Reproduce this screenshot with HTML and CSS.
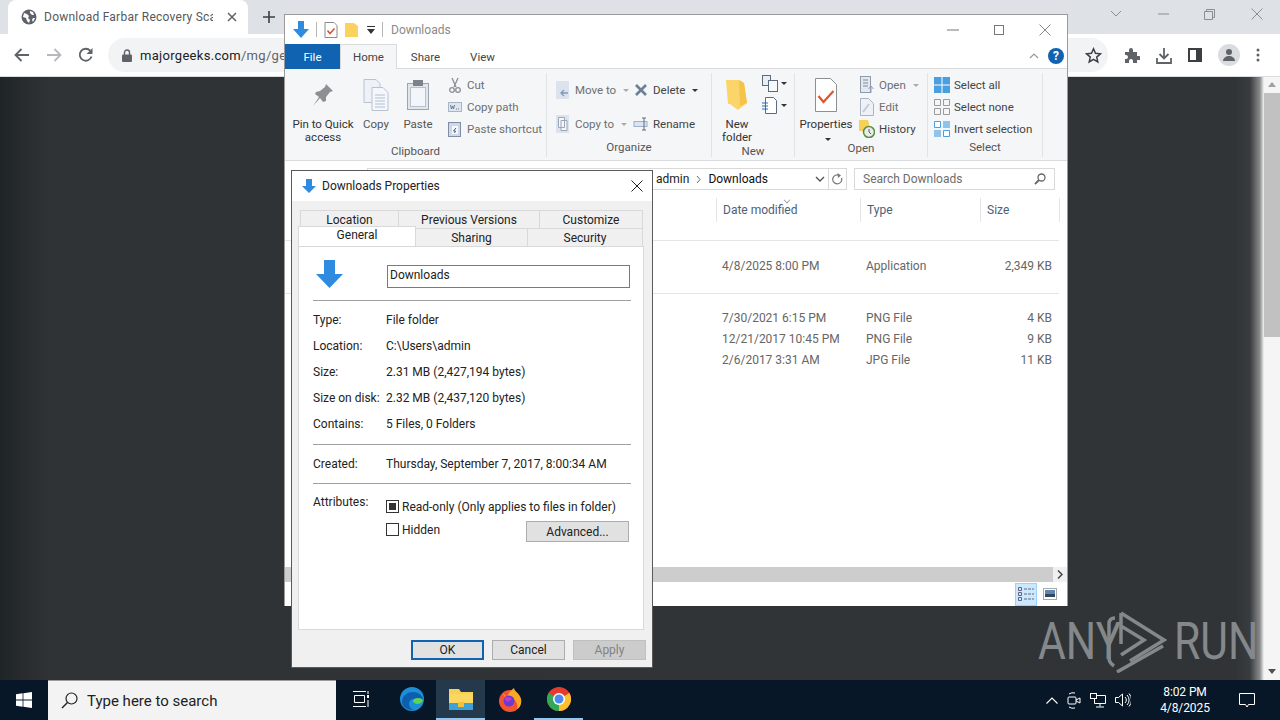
FILE: index.html
```html
<!DOCTYPE html>
<html lang="en">

<head>
    <meta charset="UTF-8">
    <title>Downloads Properties</title>
    <link rel="stylesheet" href="styles.css">
</head>

<body>
    <div class="browser">
        <div class="tabstrip">
            <div class="tab">
                <svg class="tab-globe" width="16" height="16" viewBox="0 0 16 16"><circle cx="8" cy="8" r="7.5" fill="#5f6368"/><path d="M3 4l3 1 2 2-1 2 2 2-1 3-2-2-1-3-3-1zM9 2l3 1 1 3-2 0-2-2zM12 9l2 0-2 4-1-2z" fill="#fff"/></svg>
                <span class="tab-title">Download Farbar Recovery Scan</span>
                <svg class="tab-close" width="10" height="10" viewBox="0 0 10 10"><path d="M1 1l8 8M9 1l-8 8" stroke="#5f6368" stroke-width="1.5"/></svg>
            </div>
            <svg class="tab-new" width="12" height="12" viewBox="0 0 12 12"><path d="M6 0v12M0 6h12" stroke="#3c4043" stroke-width="1.6"/></svg>
            <div class="win-controls">
                <svg width="12" height="8" viewBox="0 0 12 8"><path d="M1 1l5 5 5-5" fill="none" stroke="#8a8d91" stroke-width="1"/></svg>
                <svg width="11" height="2" viewBox="0 0 11 2"><path d="M0 1h11" stroke="#8a8d91"/></svg>
                <svg width="11" height="11" viewBox="0 0 11 11"><path d="M.5 2.5h8v8h-8zM2.5 2.5v-2h8v8h-2" fill="none" stroke="#8a8d91"/></svg>
                <svg width="12" height="12" viewBox="0 0 12 12"><path d="M.5.5l11 11M11.500.5l-11 11" stroke="#8a8d91"/></svg>
            </div>
        </div>
        <div class="toolbar">
            <svg class="nav" width="16" height="14" viewBox="0 0 16 14"><path d="M15 7H2M7.500 1L1.500 7l6 6" fill="none" stroke="#5f6368" stroke-width="1.8"/></svg>
            <svg class="nav" width="16" height="14" viewBox="0 0 16 14"><path d="M1 7h13M8.500 1l6 6-6 6" fill="none" stroke="#b6b8bb" stroke-width="1.8"/></svg>
            <svg class="nav" width="16" height="16" viewBox="0 0 16 16"><path d="M13.500 9.500A6 6 0 1 1 12.200 3.700" fill="none" stroke="#5f6368" stroke-width="1.800"/><path d="M14.500 1v6h-6z" fill="#5f6368"/></svg>
            <div class="omnibox">
                <svg width="10" height="13" viewBox="0 0 10 13"><path d="M2.500 6V3.500a2.500 2.500 0 0 1 5 0V6" fill="none" stroke="#5f6368" stroke-width="1.400"/><rect y="5.500" width="10" height="7.500" rx="1" fill="#5f6368"/></svg>
                <span class="url"><b>majorgeeks.com</b>/mg/get/farbar_recovery_scan_tool</span>
                <svg class="star" width="17" height="17" viewBox="0 0 17 17"><path d="M8.500 1.800l2 4.500 4.900.5-3.700 3.300 1.100 4.800-4.300-2.500-4.300 2.500 1.100-4.800L1.600 6.800l4.900-.5z" fill="none" stroke="#3c4043" stroke-width="1.500"/></svg>
            </div>
            <div class="tool-icons">
                <svg width="16" height="16" viewBox="0 0 16 16"><path d="M1 5h4V3a2 2 0 0 1 4 0v2h4v4h2a2 2 0 0 1 0 4h-2v3H9v-2a2 2 0 0 0-4 0v2H1v-4h1a2 2 0 0 0 0-4H1z" fill="#5f6368"/></svg>
                <svg width="16" height="17" viewBox="0 0 16 17"><path d="M8 1v10M3.500 7L8 11.500 12.500 7M1 11v5h14v-5" fill="none" stroke="#5f6368" stroke-width="1.800"/></svg>
                <svg width="14" height="14" viewBox="0 0 14 14"><rect x="1" y="1" width="12" height="12" fill="none" stroke="#3c4043" stroke-width="2"/><rect x="8" y="1" width="5" height="12" fill="#3c4043"/></svg>
                <span class="avatar"><svg width="14" height="14" viewBox="0 0 14 14"><circle cx="7" cy="4" r="3" fill="#5f6368"/><path d="M1 13c0-3 3-5 6-5s6 2 6 5z" fill="#5f6368"/></svg></span>
                <svg width="4" height="14" viewBox="0 0 4 14"><circle cx="2" cy="2" r="1.500" fill="#5f6368"/><circle cx="2" cy="7" r="1.500" fill="#5f6368"/><circle cx="2" cy="12" r="1.500" fill="#5f6368"/></svg>
            </div>
        </div>
    </div>

    <main class="desktop">
        <div class="page-scroll">
            <svg width="8" height="5" viewBox="0 0 8 5"><path d="M4 0l4 5H0z" fill="#a0a0a0"/></svg>
            <div class="page-thumb"></div>
            <svg class="scroll-down" width="8" height="5" viewBox="0 0 8 5"><path d="M0 0h8L4 5z" fill="#505050"/></svg>
        </div>
        <div class="watermark">
            <span>ANY</span>
            <svg width="60" height="62" viewBox="0 0 60 62"><path d="M8 7C3 7 2 10 2 13v34c0 4 2 6 5 8M14 2l43 27-34 21M14 2v31M14 15l23 14-23 15" fill="none" stroke="#85888a" stroke-width="3.500"/><path d="M10 61l46-26" fill="none" stroke="#85888a" stroke-width="3.500"/></svg>
            <span>RUN</span>
        </div>
    </main>

    <section class="explorer">
        <div class="ex-title">
            <svg width="16" height="17" viewBox="0 0 16 17"><path d="M5 0h6v8h5l-8 9-8-9h5z" fill="#2e8be0"/></svg>
            <i class="qa-sep"></i>
            <svg width="14" height="16" viewBox="0 0 14 16"><path d="M1 .5h9l3 3v12H1z" fill="#fff" stroke="#8a8a8a"/><path d="M3.500 8.500l2.500 3 4.500-5" fill="none" stroke="#d9502e" stroke-width="1.500"/></svg>
            <svg width="13" height="16" viewBox="0 0 13 16"><path d="M0 1h9l4 3v11H0z" fill="#fbd25e"/></svg>
            <svg class="qa-drop" width="8" height="8" viewBox="0 0 8 8"><path d="M0 0h8v1H0zM0 3h8L4 8z" fill="#333"/></svg>
            <i class="qa-sep"></i>
            <span class="ex-name">Downloads</span>
            <div class="ex-controls">
                <svg width="12" height="2" viewBox="0 0 12 2"><path d="M0 1h12" stroke="#777"/></svg>
                <svg width="10" height="10" viewBox="0 0 10 10"><rect x=".5" y=".5" width="9" height="9" fill="none" stroke="#777"/></svg>
                <svg width="12" height="12" viewBox="0 0 12 12"><path d="M.5.5l11 11M11.500.5l-11 11" stroke="#888"/></svg>
            </div>
        </div>
        <div class="ex-tabs">
            <span class="ex-tab file">File</span>
            <span class="ex-tab active">Home</span>
            <span class="ex-tab">Share</span>
            <span class="ex-tab">View</span>
            <div class="ex-help">
                <svg width="10" height="6" viewBox="0 0 10 6"><path d="M1 5l4-4 4 4" fill="none" stroke="#999" stroke-width="1.200"/></svg>
                <span class="help-dot">?</span>
            </div>
        </div>
        <div class="ribbon">
            <div class="group clipboard">
                <div class="group-body">
                    <div class="big pin">
                        <svg width="22" height="24" viewBox="0 0 22 24"><path d="M14 1l7 7-3 1-4 5 0 4-3 1-3-4-7 8 6-9-4-3 1-2 4-1 5-4z" fill="#8d8f92"/></svg>
                        <span>Pin to Quick<br>access</span>
                    </div>
                    <div class="big copy">
                        <svg width="26" height="32" viewBox="0 0 26 32"><path d="M1 .5h12l4 4v19H1z" fill="#eef2f8" stroke="#b9c2cf"/><path d="M9 8.500h11l5 5v18H9z" fill="#f4f7fb" stroke="#b9c2cf"/><path d="M12 16h10M12 19h10M12 22h10M12 25h10M12 28h10" stroke="#b4bfd0"/></svg>
                        <span>Copy</span>
                    </div>
                    <div class="big paste">
                        <svg width="22" height="30" viewBox="0 0 22 30"><rect x=".5" y="3.500" width="21" height="26" fill="#e1e5ec" stroke="#9ba4b1"/><rect x="3.500" y="7.500" width="15" height="19" fill="#f2f5fa" stroke="#b7c0cd"/><rect x="6" y="0" width="10" height="6" fill="#7d828a"/></svg>
                        <span>Paste</span>
                    </div>
                    <div class="small-col">
                        <div class="small"><svg width="14" height="16" viewBox="0 0 14 16"><path d="M4 1l4 9M10 1L6 10" stroke="#8d8f92" stroke-width="1.300"/><circle cx="4" cy="13" r="2.300" fill="none" stroke="#8d8f92" stroke-width="1.300"/><circle cx="10" cy="13" r="2.300" fill="none" stroke="#8d8f92" stroke-width="1.300"/></svg>Cut</div>
                        <div class="small"><svg width="14" height="12" viewBox="0 0 14 12"><rect x=".5" y="1.500" width="13" height="9" fill="#dfe5ee" stroke="#a9b5c6"/><path d="M2.500 4l1 4 1-3 1 3 1-4M8 8h1M10 8h1" fill="none" stroke="#6d7b8f"/></svg>Copy path</div>
                        <div class="small"><svg width="14" height="16" viewBox="0 0 14 16"><rect x=".5" y="1.500" width="12" height="14" fill="#cfd8e6" stroke="#7f8ea3"/><rect x="4" y="5" width="6" height="8" fill="#f4f7fb"/><path d="M8 7L5.500 10h2l-1 2" stroke="#4b5a70" fill="none"/></svg>Paste shortcut</div>
                    </div>
                </div>
                <div class="group-label">Clipboard</div>
            </div>
            <div class="group organize">
                <div class="group-body">
                    <div class="small-col tall">
                        <div class="small"><svg width="14" height="18" viewBox="0 0 14 18"><rect width="13" height="18" fill="#dde3ec"/><path d="M12 12H5M8 9l-3 3 3 3" fill="none" stroke="#7f9bc0" stroke-width="1.400"/></svg>Move to<i class="caret"></i></div>
                        <div class="small"><svg width="14" height="18" viewBox="0 0 14 18"><rect width="13" height="18" fill="#dde3ec"/><path d="M2.500 2.500h6v10h-6zM5 5.500h6v10H5z" fill="#f4f6fa" stroke="#9aa7b8"/></svg>Copy to<i class="caret"></i></div>
                    </div>
                    <div class="small-col tall">
                        <div class="small dark"><svg width="14" height="14" viewBox="0 0 14 14"><path d="M2 2l10 10M12 2L2 12" stroke="#6b7f97" stroke-width="2.600"/></svg>Delete<i class="caret dark-caret"></i></div>
                        <div class="small dark"><svg width="16" height="14" viewBox="0 0 16 14"><rect x="1" y="4.500" width="13" height="5" fill="#dbe4ef" stroke="#9db0c6"/><path d="M11 1v12M9 1h4M9 13h4" stroke="#5d6f86"/></svg>Rename</div>
                    </div>
                </div>
                <div class="group-label">Organize</div>
            </div>
            <div class="group newgroup">
                <div class="group-body">
                    <div class="big newfolder">
                        <svg width="22" height="32" viewBox="0 0 22 32"><path d="M0 1h13l5 3 3 20-9 7-8-6H2z" fill="#fbd569"/><path d="M13 1l5 3 3 20-7 3z" fill="#f4c34a"/></svg>
                        <span>New<br>folder</span>
                    </div>
                    <div class="new-items">
                        <div><svg width="16" height="17" viewBox="0 0 16 17"><rect x=".5" y=".5" width="8" height="10" fill="#e9eef5" stroke="#5b6b80"/><rect x="6.500" y="5.500" width="9" height="11" fill="#f8f9fb" stroke="#5b6b80"/></svg><i class="caret dark-caret"></i></div>
                        <div><svg width="16" height="17" viewBox="0 0 16 17"><path d="M3.500.5h8l3 3v13h-11z" fill="#fff" stroke="#5b6b80"/><path d="M0 6h6M0 9h6M0 12h6" stroke="#2a6fbf"/></svg><i class="caret dark-caret"></i></div>
                    </div>
                </div>
                <div class="group-label">New</div>
            </div>
            <div class="group opengroup">
                <div class="group-body">
                    <div class="big props">
                        <svg width="22" height="34" viewBox="0 0 22 34"><path d="M.5.500h15l6 6v27H.500z" fill="#fff" stroke="#8f8f8f"/><path d="M3.500 18l5 6 10-11" fill="none" stroke="#e2562c" stroke-width="2.200"/></svg>
                        <span>Properties</span>
                        <i class="caret dark-caret center"></i>
                    </div>
                    <div class="small-col">
                        <div class="small"><svg width="14" height="18" viewBox="0 0 14 18"><rect x=".5" y=".5" width="10" height="16" fill="#e3e8f0" stroke="#8f9bab"/><path d="M3 4h5M3 7h5M3 10h5" stroke="#7f8c9e"/><path d="M11 10v7M8.500 13l2.500-3 2.500 3" fill="none" stroke="#8d9fb6"/></svg>Open<i class="caret"></i></div>
                        <div class="small"><svg width="14" height="18" viewBox="0 0 14 18"><path d="M.5.500h8l5 5v12h-13z" fill="#eef2f8" stroke="#a9b5c6"/><path d="M3 14l6-8" stroke="#c3ccd8" stroke-width="2"/></svg>Edit</div>
                        <div class="small dark"><svg width="16" height="18" viewBox="0 0 16 18"><path d="M0 0h9l1 3v8H0z" fill="#f6d155"/><circle cx="10" cy="12" r="5.500" fill="#e8ecef" stroke="#5b8f3f" stroke-width="1.500"/><path d="M10 9v3l2 2" stroke="#555" fill="none"/></svg>History</div>
                    </div>
                </div>
                <div class="group-label">Open</div>
            </div>
            <div class="group selectgroup">
                <div class="group-body">
                    <div class="small-col">
                        <div class="small dark"><svg width="16" height="16" viewBox="0 0 16 16"><rect width="16" height="16" fill="#4a9fe0"/><path d="M8 0v16M0 8h16" stroke="#fff"/></svg>Select all</div>
                        <div class="small dark"><svg width="16" height="16" viewBox="0 0 16 16"><path d="M.5.500h6v6h-6zM9.500.500h6v6h-6zM.5 9.500h6v6h-6zM9.500 9.500h6v6h-6z" fill="none" stroke="#9a9a9a"/></svg>Select none</div>
                        <div class="small dark"><svg width="16" height="16" viewBox="0 0 16 16"><path d="M.5.500h6v6h-6zM9.500 9.500h6v6h-6z" fill="#fff" stroke="#4a9fe0"/><path d="M9 0h7v7H9zM0 9h7v7H0z" fill="#8cc4ee"/></svg>Invert selection</div>
                    </div>
                </div>
                <div class="group-label">Select</div>
            </div>
        </div>
        <div class="addr-row">
            <div class="addr-box">
                <span class="crumb-prev">admin</span>
                <svg width="5" height="7" viewBox="0 0 5 7"><path d="M1 0l3 3.500L1 7" fill="none" stroke="#666"/></svg>
                <span class="crumb">Downloads</span>
                <svg class="addr-drop" width="10" height="6" viewBox="0 0 10 6"><path d="M1 1l4 4 4-4" fill="none" stroke="#555" stroke-width="1.400"/></svg>
                <span class="addr-refresh"><svg width="11" height="12" viewBox="0 0 11 12"><path d="M9.500 5a4.500 4.500 0 1 1-2-2.500" fill="none" stroke="#777" stroke-width="1.200"/><path d="M5.500 0l3.500 2.500L6 5z" fill="#777"/></svg></span>
            </div>
            <div class="search-box">
                <span>Search Downloads</span>
                <svg width="12" height="12" viewBox="0 0 12 12"><circle cx="7.500" cy="4.500" r="3.500" fill="none" stroke="#666" stroke-width="1.300"/><path d="M5 7l-4 4" stroke="#666" stroke-width="1.800"/></svg>
            </div>
        </div>
        <div class="file-grid">
            <div class="file-head">
                <span></span>
                <span class="col-head sorted">Date modified</span>
                <span class="col-head">Type</span>
                <span class="col-head">Size</span>
            </div>
            <div class="file-group single">
                <div class="file-row"><span></span><span>4/8/2025 8:00 PM</span><span>Application</span><span class="num">2,349 KB</span></div>
            </div>
            <div class="file-group">
                <div class="file-row"><span></span><span>7/30/2021 6:15 PM</span><span>PNG File</span><span class="num">4 KB</span></div>
                <div class="file-row"><span></span><span>12/21/2017 10:45 PM</span><span>PNG File</span><span class="num">9 KB</span></div>
                <div class="file-row"><span></span><span>2/6/2017 3:31 AM</span><span>JPG File</span><span class="num">11 KB</span></div>
            </div>
        </div>
        <div class="h-scroll">
            <div class="h-thumb"></div>
            <svg width="6" height="9" viewBox="0 0 6 9"><path d="M1 .5l4 4-4 4" fill="none" stroke="#444" stroke-width="1.500"/></svg>
        </div>
        <div class="status-row">
            <span class="view-btn on"><svg width="16" height="14" viewBox="0 0 16 14"><path d="M.5.5h3v3h-3zM.5 5.500h3v3h-3zM.5 10.500h3v3h-3z" fill="none" stroke="#667"/><path d="M6 2h10M6 7h10M6 12h10" stroke="#667" stroke-dasharray="3 1"/></svg></span>
            <span class="view-btn"><svg width="14" height="12" viewBox="0 0 14 12"><rect x=".5" y=".5" width="13" height="11" fill="#fff" stroke="#aaa"/><rect x="2" y="2" width="10" height="4" fill="#5d86b0"/><rect x="2" y="6" width="10" height="3" fill="#33475f"/></svg></span>
        </div>
    </section>

    <section class="dialog">
        <div class="dlg-title">
            <svg width="14" height="14" viewBox="0 0 14 14"><path d="M4 0h6v7h4l-7 7-7-7h4z" fill="#2e8be0"/></svg>
            <span>Downloads Properties</span>
            <svg class="dlg-close" width="12" height="12" viewBox="0 0 12 12"><path d="M.5.5l11 11M11.500.5l-11 11" stroke="#222"/></svg>
        </div>
        <div class="dlg-body">
            <div class="dlg-tabs">
                <div class="tab-line back">
                    <span class="t-location">Location</span>
                    <span class="t-previous">Previous Versions</span>
                    <span class="t-custom">Customize</span>
                </div>
                <div class="tab-line front">
                    <span class="t-general">General</span>
                    <span class="t-sharing">Sharing</span>
                    <span class="t-security">Security</span>
                </div>
            </div>
            <div class="dlg-page">
                <div class="name-row">
                    <svg width="27" height="28" viewBox="0 0 27 28"><path d="M8 0h11v14h8L13.500 28 0 14h8z" fill="#2e8be0"/></svg>
                    <div class="name-input">Downloads</div>
                </div>
                <hr class="rule first">
                <dl class="props-list">
                    <div><dt>Type:</dt><dd>File folder</dd></div>
                    <div><dt>Location:</dt><dd>C:\Users\admin</dd></div>
                    <div><dt>Size:</dt><dd>2.31 MB (2,427,194 bytes)</dd></div>
                    <div><dt>Size on disk:</dt><dd>2.32 MB (2,437,120 bytes)</dd></div>
                    <div><dt>Contains:</dt><dd>5 Files, 0 Folders</dd></div>
                </dl>
                <hr class="rule">
                <div class="created"><span class="prop-key">Created:</span><span>Thursday, September 7, 2017, 8:00:34 AM</span></div>
                <hr class="rule">
                <div class="attrs">
                    <span class="prop-key">Attributes:</span>
                    <div class="attr-list">
                        <div class="check-row"><span class="check mixed"></span>Read-only (Only applies to files in folder)</div>
                        <div class="check-row"><span class="check"></span>Hidden<button class="dlg-btn advanced">Advanced...</button></div>
                    </div>
                </div>
            </div>
            <div class="dlg-actions">
                <button class="dlg-btn ok">OK</button>
                <button class="dlg-btn">Cancel</button>
                <button class="dlg-btn off">Apply</button>
            </div>
        </div>
    </section>

    <footer class="taskbar">
        <svg class="start" width="16" height="16" viewBox="0 0 16 16"><path d="M0 2.200L6.600 1.300V7.500H0zM7.400 1.200L16 0V7.500H7.400zM0 8.400H6.600V14.700L0 13.800zM7.400 8.400H16V16L7.400 14.800z" fill="#fff"/></svg>
        <div class="search">
            <svg width="17" height="17" viewBox="0 0 17 17"><circle cx="10.500" cy="6.500" r="5.500" fill="none" stroke="#222" stroke-width="1.200"/><path d="M6.500 10.500L1 16" stroke="#222" stroke-width="1.400"/></svg>
            <span>Type here to search</span>
        </div>
        <div class="task-icons">
            <span class="task"><svg width="16" height="16" viewBox="0 0 16 16"><path d="M0 .5h13M0 15.500h13M1.500 4.500h10v7h-10z" fill="none" stroke="#fff"/><rect x="14" y="4" width="2" height="3" fill="#fff"/><path d="M15 0v3M15 9v7" stroke="#fff"/></svg></span>
            <span class="task"><svg width="24" height="24" viewBox="0 0 24 24"><circle cx="12" cy="12" r="12" fill="#1d8fd6"/><path d="M2 15C2 8 8 5 13 5c6 0 10 4 10 8 0 3-3 4-6 4-2 0-4-1-4-3 0-1 1-2 1-2-3 0-5 2-5 5 0 3 2 5 5 6C7 23 2 20 2 15z" fill="#0b5fae"/><path d="M23 13c0 3-3 4-6 4-2 0-4-1-4-3 0-1 1-2 1-2 3-2 8-1 9 1z" fill="#5ed35c"/></svg></span>
            <span class="task current"><svg width="24" height="21" viewBox="0 0 24 21"><path d="M0 0h10l2 3h12v18H0z" fill="#f8cf57"/><rect y="5" width="24" height="16" fill="#fbd75f"/><rect y="14" width="24" height="7" fill="#3ba3d8"/><rect x="9" y="13" width="6" height="5" fill="#f5c13d"/></svg></span>
            <span class="task"><svg width="24" height="25" viewBox="0 0 24 25"><circle cx="12" cy="14" r="11" fill="#f4532f"/><path d="M5 6c1 3 1 4 4 4 1-3 3-6 7-9 0 3 5 5 7 11 1 4-1 9-4 10 2-6-3-12-9-10z" fill="#f9a825"/><circle cx="11" cy="14" r="5.500" fill="#6a3bd1"/><path d="M6 12c3-3 6-2 8 0l-4 3z" fill="#c23ac7"/></svg></span>
            <span class="task running"><svg width="24" height="24" viewBox="0 0 24 24"><circle cx="12" cy="12" r="12" fill="#e33b2e"/><path d="M12 12L1.600 6A12 12 0 0 0 12 24z" fill="#35a853"/><path d="M12 12l10.400-6A12 12 0 0 1 12 24z" fill="#fbc02d"/><circle cx="12" cy="12" r="6" fill="#fff"/><circle cx="12" cy="12" r="4.500" fill="#4a8bf0"/></svg></span>
        </div>
        <div class="tray">
            <svg width="12" height="7" viewBox="0 0 12 7"><path d="M.5 6.500L6 1l5.500 5.500" fill="none" stroke="#fff" stroke-width="1.100"/></svg>
            <svg width="14" height="17" viewBox="0 0 14 17"><rect x="1" y="5" width="8" height="7" rx="1" fill="none" stroke="#fff"/><path d="M9 8l4-2v5l-4-2M2 2a7 7 0 0 1 6-1M2 15a7 7 0 0 0 6 1" fill="none" stroke="#fff"/></svg>
            <svg width="16" height="15" viewBox="0 0 16 15"><path d="M4.500 2.500h11v8h-11zM10 10.500v3M6 14h8" fill="none" stroke="#fff"/><rect x=".5" y=".5" width="6" height="5" fill="#0b1a2b" stroke="#fff"/></svg>
            <svg width="16" height="14" viewBox="0 0 16 14"><path d="M.5 4.500h3l4-3.500v12l-4-3.500h-3z" fill="none" stroke="#fff"/><path d="M10 4a4 4 0 0 1 0 6M12 2a7 7 0 0 1 0 10M14 .5a9.500 9.500 0 0 1 0 13" fill="none" stroke="#fff"/></svg>
            <div class="clock"><span>8:02 PM</span><span>4/8/2025</span></div>
            <svg class="notify" width="16" height="15" viewBox="0 0 16 15"><path d="M.5.5h15v11H9.500L8 14l-1.500-2.500h-6z" fill="none" stroke="#fff"/></svg>
        </div>
    </footer>
</body>

</html>
```

FILE: styles.css
```css
* {
    box-sizing: border-box;
}

html, body {
    margin: 0;
    height: 100%;
}

body {
    width: 1280px;
    height: 720px;
    overflow: hidden;
    display: flex;
    flex-direction: column;
    position: relative;
    font-family: Roboto, "Liberation Sans", sans-serif;
    font-size: 12px;
    color: #222;
}

svg {
    flex: none;
    display: block;
}

/* browser chrome */
.tabstrip {
    height: 34px;
    background-color: #dee1e6;
    display: flex;
    align-items: flex-end;
    padding-left: 8px;
}

.tab {
    width: 240px;
    height: 34px;
    background-color: #fff;
    border-radius: 8px 8px 0 0;
    display: flex;
    align-items: center;
    padding: 0 11px 0 13px;
    margin-top: 0;
}

.tab-title {
    flex: 1;
    margin-left: 7px;
    font-size: 12px;
    letter-spacing: .25px;
    color: #55585c;
    white-space: nowrap;
    overflow: hidden;
}

.tab-close {
    margin-left: 14px;
}

.tab-new {
    margin: 0 0 11px 15px;
}

.win-controls {
    margin-left: auto;
    width: 170px;
    height: 34px;
    display: flex;
    align-items: center;
    justify-content: space-between;
    padding: 0 17px 6px 0;
}

.toolbar {
    height: 43px;
    background-color: #fff;
    border-bottom: 1px solid #dadce0;
    display: flex;
    align-items: center;
    padding-left: 14px;
}

.nav {
    margin-right: 16px;
}

.nav:nth-child(3) {
    margin-right: 14px;
}

.omnibox {
    width: 1000px;
    height: 34px;
    margin-left: 0;
    background-color: #f1f3f4;
    border-radius: 17px;
    display: flex;
    align-items: center;
    padding: 0 6px 0 14px;
}

.url {
    flex: 1;
    margin-left: 8px;
    font-size: 13px;
    letter-spacing: .3px;
    color: #5f6368;
    white-space: nowrap;
    overflow: hidden;
}

.url b {
    font-weight: 400;
    color: #202124;
}

.tool-icons {
    display: flex;
    align-items: center;
    gap: 16px;
    margin-left: 16px;
}

.avatar {
    width: 22px;
    height: 22px;
    border-radius: 50%;
    background-color: #dadce0;
    display: flex;
    align-items: center;
    justify-content: center;
}

/* page behind the windows */
.desktop {
    flex: 1;
    display: flex;
    justify-content: flex-end;
    background: linear-gradient(90deg, #1f2427 0, #2a2e30 30px, #2f3335 50px, #303436 1235px, #3a3d3f 1250px, #8b8d8e 1260px, #f5f5f5 1264px);
    position: relative;
}

.page-scroll {
    width: 16px;
    background-color: #f5f5f5;
    display: flex;
    flex-direction: column;
    align-items: center;
    padding-top: 5px;
}

.page-thumb {
    width: 16px;
    height: 244px;
    margin-top: 6px;
    background-color: #c1c1c1;
}

.scroll-down {
    margin-top: auto;
    margin-bottom: 6px;
}

.watermark {
    position: absolute;
    left: 1038px;
    top: 534px;
    display: flex;
    align-items: center;
    gap: 7px;
    color: #85888a;
    font-size: 52px;
    line-height: 62px;
    font-family: "Liberation Sans Narrow", Roboto, sans-serif;
}

.watermark span {
    width: 62px;
    transform: scaleX(.82);
    transform-origin: left center;
    white-space: nowrap;
}

/* explorer window */
.explorer {
    position: absolute;
    left: 284px;
    top: 14px;
    width: 784px;
    height: 592px;
    background-color: #fff;
    border: 1px solid #9a9a9a;
    border-bottom: 0;
    display: flex;
    flex-direction: column;
}

.ex-title {
    height: 29px;
    display: flex;
    align-items: center;
    padding-left: 8px;
    gap: 7px;
}

.qa-sep {
    width: 1px;
    height: 15px;
    background-color: #b5b5b5;
}

.qa-drop {
    margin-left: 2px;
}

.ex-name {
    color: #8a8a8a;
    margin-left: 1px;
}

.ex-controls {
    margin-left: auto;
    width: 120px;
    display: flex;
    align-items: center;
    justify-content: space-between;
    padding-right: 16px;
}

.ex-tabs {
    height: 25px;
    display: flex;
    align-items: stretch;
    border-bottom: 1px solid #dadbdc;
}

.ex-tab {
    width: 57px;
    display: flex;
    align-items: center;
    justify-content: center;
    margin-bottom: -1px;
    color: #444;
    font-size: 11.5px;
}

.ex-tab.file {
    width: 55px;
    background-color: #0f63b0;
    color: #fff;
}

.ex-tab.active {
    background-color: #f5f6f7;
    border: 1px solid #dadbdc;
    border-bottom: 0;
}

.ex-help {
    margin-left: auto;
    display: flex;
    align-items: center;
    gap: 9px;
    padding-right: 3px;
}

.help-dot {
    width: 16px;
    height: 16px;
    border-radius: 50%;
    background-color: #0f63b0;
    color: #fff;
    font-weight: 700;
    font-size: 12px;
    text-align: center;
    line-height: 16px;
}

.ribbon {
    height: 92px;
    background-color: #f5f6f7;
    border-bottom: 1px solid #dadbdc;
    display: flex;
    padding-top: 4px;
}

.group {
    display: flex;
    flex-direction: column;
    border-right: 1px solid #e2e3e4;
    height: 84px;
}

.clipboard { width: 262px; }
.organize { width: 165px; }
.newgroup { width: 83px; }
.opengroup { width: 133px; }
.selectgroup { width: 115px; }

.group-body {
    flex: 1;
    display: flex;
}

.group-label {
    height: 17px;
    text-align: center;
    color: #555;
    font-size: 11.5px;
    line-height: 15px;
}

.big {
    display: flex;
    flex-direction: column;
    align-items: center;
    text-align: center;
    color: #555;
    line-height: 13px;
    font-size: 11.5px;
}

.big svg {
    height: 34px;
    margin: 5px 0 6px;
}

.big.pin {
    width: 70px;
    margin-left: 3px;
    color: #333;
}

.big.copy { width: 36px; }
.big.paste { width: 48px; }

.big.newfolder {
    width: 50px;
    margin-left: 0;
    color: #333;
}

.big.props {
    width: 62px;
    margin-left: 0;
    color: #333;
}

.big .center {
    margin-top: 7px;
}

.small-col {
    display: flex;
    flex-direction: column;
    padding-top: 1px;
}

.small-col.tall {
    gap: 12px;
    padding-top: 6px;
    width: 84px;
}

.clipboard .small-col {
    margin-left: 5px;
}

.organize .small-col.tall:first-child {
    margin-left: 8px;
}

.opengroup .small-col {
    margin-left: 2px;
}

.selectgroup .small-col {
    margin-left: 6px;
}

.small {
    height: 22px;
    display: flex;
    align-items: center;
    gap: 4px;
    color: #6d6f72;
    font-size: 11.5px;
    white-space: nowrap;
}

.small svg {
    width: 16px;
}

.small.dark {
    color: #444;
}

.caret {
    width: 0;
    height: 0;
    margin-left: 3px;
    border-left: 3px solid transparent;
    border-right: 3px solid transparent;
    border-top: 3px solid #aaa;
}

.caret.dark-caret {
    border-top-color: #333;
}

.new-items {
    display: flex;
    flex-direction: column;
    gap: 5px;
    padding-top: 2px;
    margin-left: 0;
}

.new-items div {
    display: flex;
    align-items: center;
}

.addr-row {
    height: 36px;
    display: flex;
    justify-content: flex-end;
    align-items: center;
    gap: 7px;
    padding-right: 12px;
}

.addr-box {
    width: 480px;
    height: 22px;
    border: 1px solid #d9d9d9;
    display: flex;
    align-items: center;
    justify-content: flex-end;
    gap: 7px;
    color: #222;
}

.addr-drop {
    margin-left: 40px;
    margin-right: -4px;
}

.crumb {
    color: #111;
}

.addr-refresh {
    width: 18px;
    height: 20px;
    border-left: 1px solid #d9d9d9;
    display: flex;
    align-items: center;
    justify-content: center;
}

.search-box {
    width: 201px;
    height: 22px;
    border: 1px solid #d9d9d9;
    display: flex;
    align-items: center;
    justify-content: space-between;
    padding: 0 8px;
    color: #6d6d6d;
}

.file-grid {
    flex: 1;
    padding-right: 8px;
}

.file-head,
.file-row {
    display: grid;
    grid-template-columns: 431px 144px 120px 80px;
}

.file-head {
    height: 44px;
    align-items: start;
    border-bottom: 1px solid #e5e5e5;
    padding-top: 1px;
    margin-left: 0;
}

.col-head {
    height: 24px;
    line-height: 24px;
    padding-left: 6px;
    color: #4c607a;
    border-left: 1px solid #e5e5e5;
    position: relative;
}

.col-head:last-child {
    border-right: 1px solid #e5e5e5;
}

.sorted::after {
    content: "";
    position: absolute;
    left: 67px;
    top: -1px;
    width: 5px;
    height: 5px;
    border-right: 1px solid #999;
    border-bottom: 1px solid #999;
    transform: rotate(45deg) scale(.8);
}

.file-group.single {
    height: 53px;
    padding-top: 15px;
    border-bottom: 1px solid #e5e5e5;
}

.file-group {
    padding-top: 14px;
}

.file-row {
    height: 21px;
    line-height: 21px;
    color: #666;
}

.file-row span:nth-child(2),
.file-row span:nth-child(3) {
    padding-left: 6px;
}

.num {
    text-align: right;
    padding-right: 8px;
}

.h-scroll {
    height: 15px;
    display: flex;
    align-items: center;
    padding-right: 4px;
    background-color: #f0f0f0;
}

.h-thumb {
    flex: 1;
    height: 15px;
    margin-right: 4px;
    background-color: #cdcdcd;
}

.status-row {
    height: 24px;
    display: flex;
    justify-content: flex-end;
    align-items: center;
    gap: 2px;
    padding-right: 6px;
}

.view-btn {
    width: 22px;
    height: 23px;
    display: flex;
    align-items: center;
    justify-content: center;
}

.view-btn.on {
    background-color: #cce8ff;
    border: 1px solid #99d1ff;
}

/* properties dialog */
.dialog {
    position: absolute;
    left: 291px;
    top: 170px;
    width: 362px;
    height: 498px;
    background-color: #fff;
    border: 1px solid #5a5a5a;
    display: flex;
    flex-direction: column;
}

.dlg-title {
    height: 30px;
    display: flex;
    align-items: center;
    padding-left: 10px;
    gap: 6px;
    color: #222;
}

.dlg-close {
    margin-left: auto;
    margin-right: 9px;
}

.dlg-body {
    flex: 1;
    background-color: #f0f0f0;
    padding: 9px 6px 0;
    display: flex;
    flex-direction: column;
}

.dlg-tabs {
    height: 36px;
    display: flex;
    flex-direction: column;
    margin: 0 0 0 0;
}

.tab-line {
    display: flex;
    height: 18px;
    text-align: center;
    line-height: 18px;
    color: #222;
}

.tab-line span {
    border: 1px solid #d9d9d9;
    border-bottom: 0;
    margin-left: -1px;
}

.tab-line.back {
    padding-left: 3px;
}

.t-location { width: 99px; }
.t-previous { width: 142px; }
.t-custom { width: 104px; }

.tab-line.front {
    position: relative;
    padding-left: 1px;
}

.t-general {
    width: 118px;
    height: 20px;
    margin-top: -2px;
    background-color: #fff;
    position: relative;
    z-index: 1;
    line-height: 16px;
}

.t-sharing { width: 113px; }
.t-security { width: 116px; }

.dlg-page {
    height: 384px;
    width: 346px;
    background-color: #fff;
    border: 1px solid #d9d9d9;
    padding: 0 13px 0 14px;
    display: flex;
    flex-direction: column;
}

.name-row {
    display: flex;
    align-items: center;
    padding-left: 3px;
    height: 53px;
    gap: 44px;
}

.name-input {
    width: 246px;
    height: 23px;
    margin-top: 6px;
    border: 1px solid #7a7a7a;
    padding-left: 2px;
    line-height: 18px;
    color: #222;
}

.rule {
    width: 318px;
    height: 1px;
    border: 0;
    margin: 0;
    background-color: #a0a0a0;
}

.props-list {
    margin: 0;
    padding: 6px 0 7px;
}

.props-list div {
    display: flex;
    height: 26px;
    line-height: 26px;
}

.props-list dt,
.prop-key {
    width: 73px;
    flex: none;
    color: #222;
}

.props-list dd {
    margin: 0;
}

.created {
    display: flex;
    height: 38px;
    line-height: 38px;
}

.attrs {
    display: flex;
    padding-top: 11px;
}

.attr-list {
    flex: 1;
}

.check-row {
    height: 23px;
    display: flex;
    align-items: center;
    gap: 3px;
    position: relative;
}

.check {
    width: 13px;
    height: 13px;
    border: 1px solid #333;
    background-color: #fff;
}

.check.mixed {
    background-color: #333;
    box-shadow: inset 0 0 0 2px #fff;
}

.dlg-btn {
    width: 73px;
    height: 20px;
    padding: 0;
    font: inherit;
    color: #222;
    background-color: #e1e1e1;
    border: 1px solid #adadad;
}

.dlg-btn.advanced {
    width: 103px;
    height: 21px;
    margin-left: auto;
    margin-right: 1px;
    margin-top: 4px;
}

.dlg-btn.ok {
    border: 2px solid #0f63b0;
}

.dlg-btn.off {
    background-color: #cccccc;
    border-color: #bfbfbf;
    color: #838383;
}

.dlg-actions {
    display: flex;
    justify-content: flex-end;
    gap: 8px;
    padding-top: 10px;
    margin-right: 0;
}

/* taskbar */
.taskbar {
    height: 40px;
    background-color: #071728;
    display: flex;
    align-items: center;
    color: #fff;
}

.start {
    margin-left: 16px;
}

.search {
    width: 288px;
    height: 40px;
    margin-left: 16px;
    background-color: #f3f3f3;
    border-top: 1px solid #9b9b9b;
    display: flex;
    align-items: center;
    padding-left: 13px;
    gap: 9px;
    color: #222;
    font-size: 15px;
}

.task-icons {
    display: flex;
    height: 40px;
}

.task {
    width: 49px;
    display: flex;
    align-items: center;
    justify-content: center;
    border-bottom: 2px solid transparent;
}

.task:first-child {
    margin-right: 2px;
}

.task.current {
    background-color: #24394c;
    border-bottom-color: #8fc8f0;
}

.task.running {
    border-bottom-color: #8fc8f0;
}

.tray {
    margin-left: auto;
    display: flex;
    align-items: center;
    gap: 9px;
    padding-right: 25px;
}

.clock {
    width: 66px;
    margin-left: 12px;
    display: flex;
    flex-direction: column;
    align-items: center;
    font-size: 12px;
    line-height: 16px;
    letter-spacing: -.1px;
}

.notify {
    margin-left: 12px;
}
```
